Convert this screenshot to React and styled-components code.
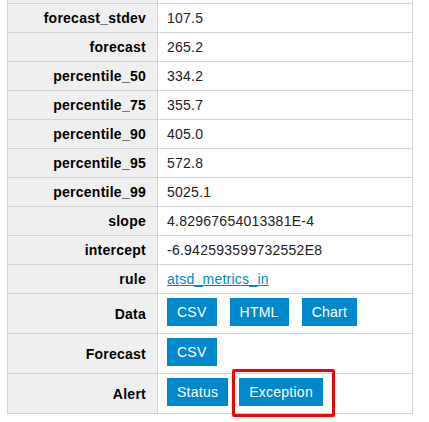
import React from "react";
import styled, { createGlobalStyle } from "styled-components";

const Global = createGlobalStyle`
  html, body { margin: 0; padding: 0; background: #fff; }
  body { font-family: "Liberation Sans", Arial, sans-serif; font-size: 14px; }
`;

const Page = styled.div`
  padding-left: 7px;
  height: 422px;
  overflow: hidden;
`;

const Grid = styled.div`
  display: grid;
  grid-template-columns: 150px 255px;
  width: 406px;
  margin-top: -26px;
  border-left: 1px solid #d2d2d2;
  border-top: 1px solid #d2d2d2;
  letter-spacing: 0.25px;
`;

const Cell = styled.div`
  box-sizing: border-box;
  height: ${(p) => (p.$tall ? "40px" : "29px")};
  border-right: 1px solid #d2d2d2;
  border-bottom: 1px solid #d2d2d2;
  display: flex;
  line-height: 16px;
  white-space: nowrap;
`;

const Label = styled(Cell)`
  background: #efefef;
  justify-content: flex-end;
  align-items: center;
  font-weight: bold;
  color: #000;
  padding-right: 11px;
`;

const Value = styled(Cell)`
  background: #fff;
  color: #222;
  padding-left: 9px;
  align-items: ${(p) => (p.$tall ? "flex-start" : "center")};
  padding-top: ${(p) => (p.$tall ? "4px" : "0")};
`;

const Link = styled.a`
  color: #0088cc;
  text-decoration: underline;
`;

const Buttons = styled.div`
  display: flex;
  gap: 13px;
  align-items: center;
`;

const Btn = styled.span`
  position: relative;
  display: inline-flex;
  align-items: center;
  height: 28px;
  padding: 0 10px;
  background: #0088cc;
  color: #fff;
  font-size: 14px;
  ${(p) =>
    p.$highlight &&
    `
    margin-left: -2px;
    &::after {
      content: "";
      position: absolute;
      top: -9px;
      bottom: -11px;
      left: -7px;
      right: -12px;
      border: 3px solid #f50000;
      border-radius: 2px;
    }
  `}
`;

const rows = [
  ["", ""],
  ["forecast_stdev", "107.5"],
  ["forecast", "265.2"],
  ["percentile_50", "334.2"],
  ["percentile_75", "355.7"],
  ["percentile_90", "405.0"],
  ["percentile_95", "572.8"],
  ["percentile_99", "5025.1"],
  ["slope", "4.82967654013381E-4"],
  ["intercept", "-6.942593599732552E8"],
];

const buttonRows = [
  ["Data", ["CSV", "HTML", "Chart"]],
  ["Forecast", ["CSV"]],
  ["Alert", ["Status", "Exception"]],
];

export default function App() {
  return (
    <Page>
      <Global />
      <Grid>
        {rows.map(([k, v], i) => (
          <React.Fragment key={i}>
            <Label>{k}</Label>
            <Value>{v}</Value>
          </React.Fragment>
        ))}
        <Label>rule</Label>
        <Value>
          <Link href="#">atsd_metrics_in</Link>
        </Value>
        {buttonRows.map(([k, btns]) => (
          <React.Fragment key={k}>
            <Label $tall>{k}</Label>
            <Value $tall>
              <Buttons>
                {btns.map((b) => (
                  <Btn key={b} $highlight={b === "Exception"}>
                    {b}
                  </Btn>
                ))}
              </Buttons>
            </Value>
          </React.Fragment>
        ))}
      </Grid>
    </Page>
  );
}
